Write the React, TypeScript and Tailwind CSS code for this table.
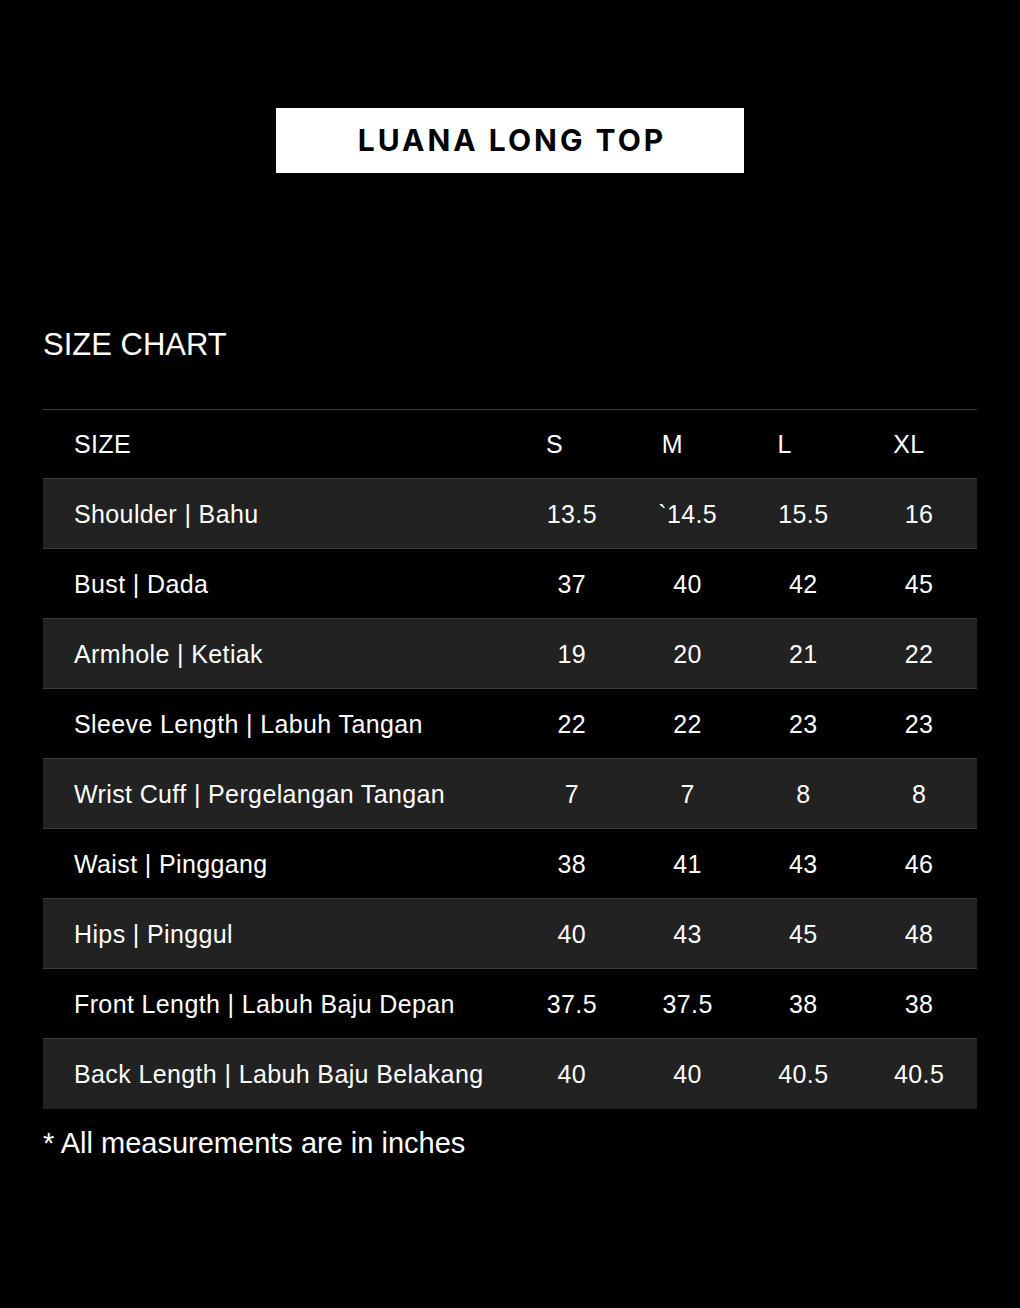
const sizes = ["S", "M", "L", "XL"];

const rows: { label: string; values: string[] }[] = [
  { label: "Shoulder | Bahu", values: ["13.5", "`14.5", "15.5", "16"] },
  { label: "Bust | Dada", values: ["37", "40", "42", "45"] },
  { label: "Armhole | Ketiak", values: ["19", "20", "21", "22"] },
  { label: "Sleeve Length | Labuh Tangan", values: ["22", "22", "23", "23"] },
  { label: "Wrist Cuff | Pergelangan Tangan", values: ["7", "7", "8", "8"] },
  { label: "Waist | Pinggang", values: ["38", "41", "43", "46"] },
  { label: "Hips | Pinggul", values: ["40", "43", "45", "48"] },
  { label: "Front Length | Labuh Baju Depan", values: ["37.5", "37.5", "38", "38"] },
  { label: "Back Length | Labuh Baju Belakang", values: ["40", "40", "40.5", "40.5"] },
];

export default function App() {
  return (
    <div className="w-[1020px] h-[1308px] bg-black text-white font-['Liberation_Sans',Arial,sans-serif]">
      {/* Title */}
      <div className="pt-[108px] flex justify-center">
        <div className="w-[468px] h-[65px] bg-white flex items-center justify-center">
          <span className="text-black font-['Inter',sans-serif] font-bold text-[30px] tracking-[0.1em] pl-[4px]">
            LUANA LONG TOP
          </span>
        </div>
      </div>

      <div className="px-[43px]">
        <h2 className="mt-[154px] text-[31px] leading-[36px] text-white">SIZE CHART</h2>

        {/* Table */}
        <div className="mt-[46px] border-t border-[#3d3d3d]">
          <div className="grid grid-cols-[471px_1fr_1fr_1fr_1fr] h-[69px] pt-[2px] items-center text-[25px] tracking-[0.015em] border-b border-[#3d3d3d]">
            <div className="pl-[31px]">SIZE</div>
            {sizes.map((s) => (
              <div key={s} className="pl-[32px]">
                {s}
              </div>
            ))}
          </div>
          {rows.map((r, i) => (
            <div
              key={r.label}
              className={`grid grid-cols-[471px_1fr_1fr_1fr_1fr] h-[70px] pt-[2px] items-center text-[25px] tracking-[0.015em] ${
                i % 2 === 0 ? "bg-[#222222]" : "bg-black"
              } ${i < rows.length - 1 ? "border-b border-[#3d3d3d]" : ""}`}
            >
              <div className="pl-[31px]">{r.label}</div>
              {r.values.map((v, j) => (
                <div key={j} className="text-center">
                  {v}
                </div>
              ))}
            </div>
          ))}
        </div>

        <p className="mt-[16px] text-[29px] leading-[36px]">* All measurements are in inches</p>
      </div>
    </div>
  );
}
